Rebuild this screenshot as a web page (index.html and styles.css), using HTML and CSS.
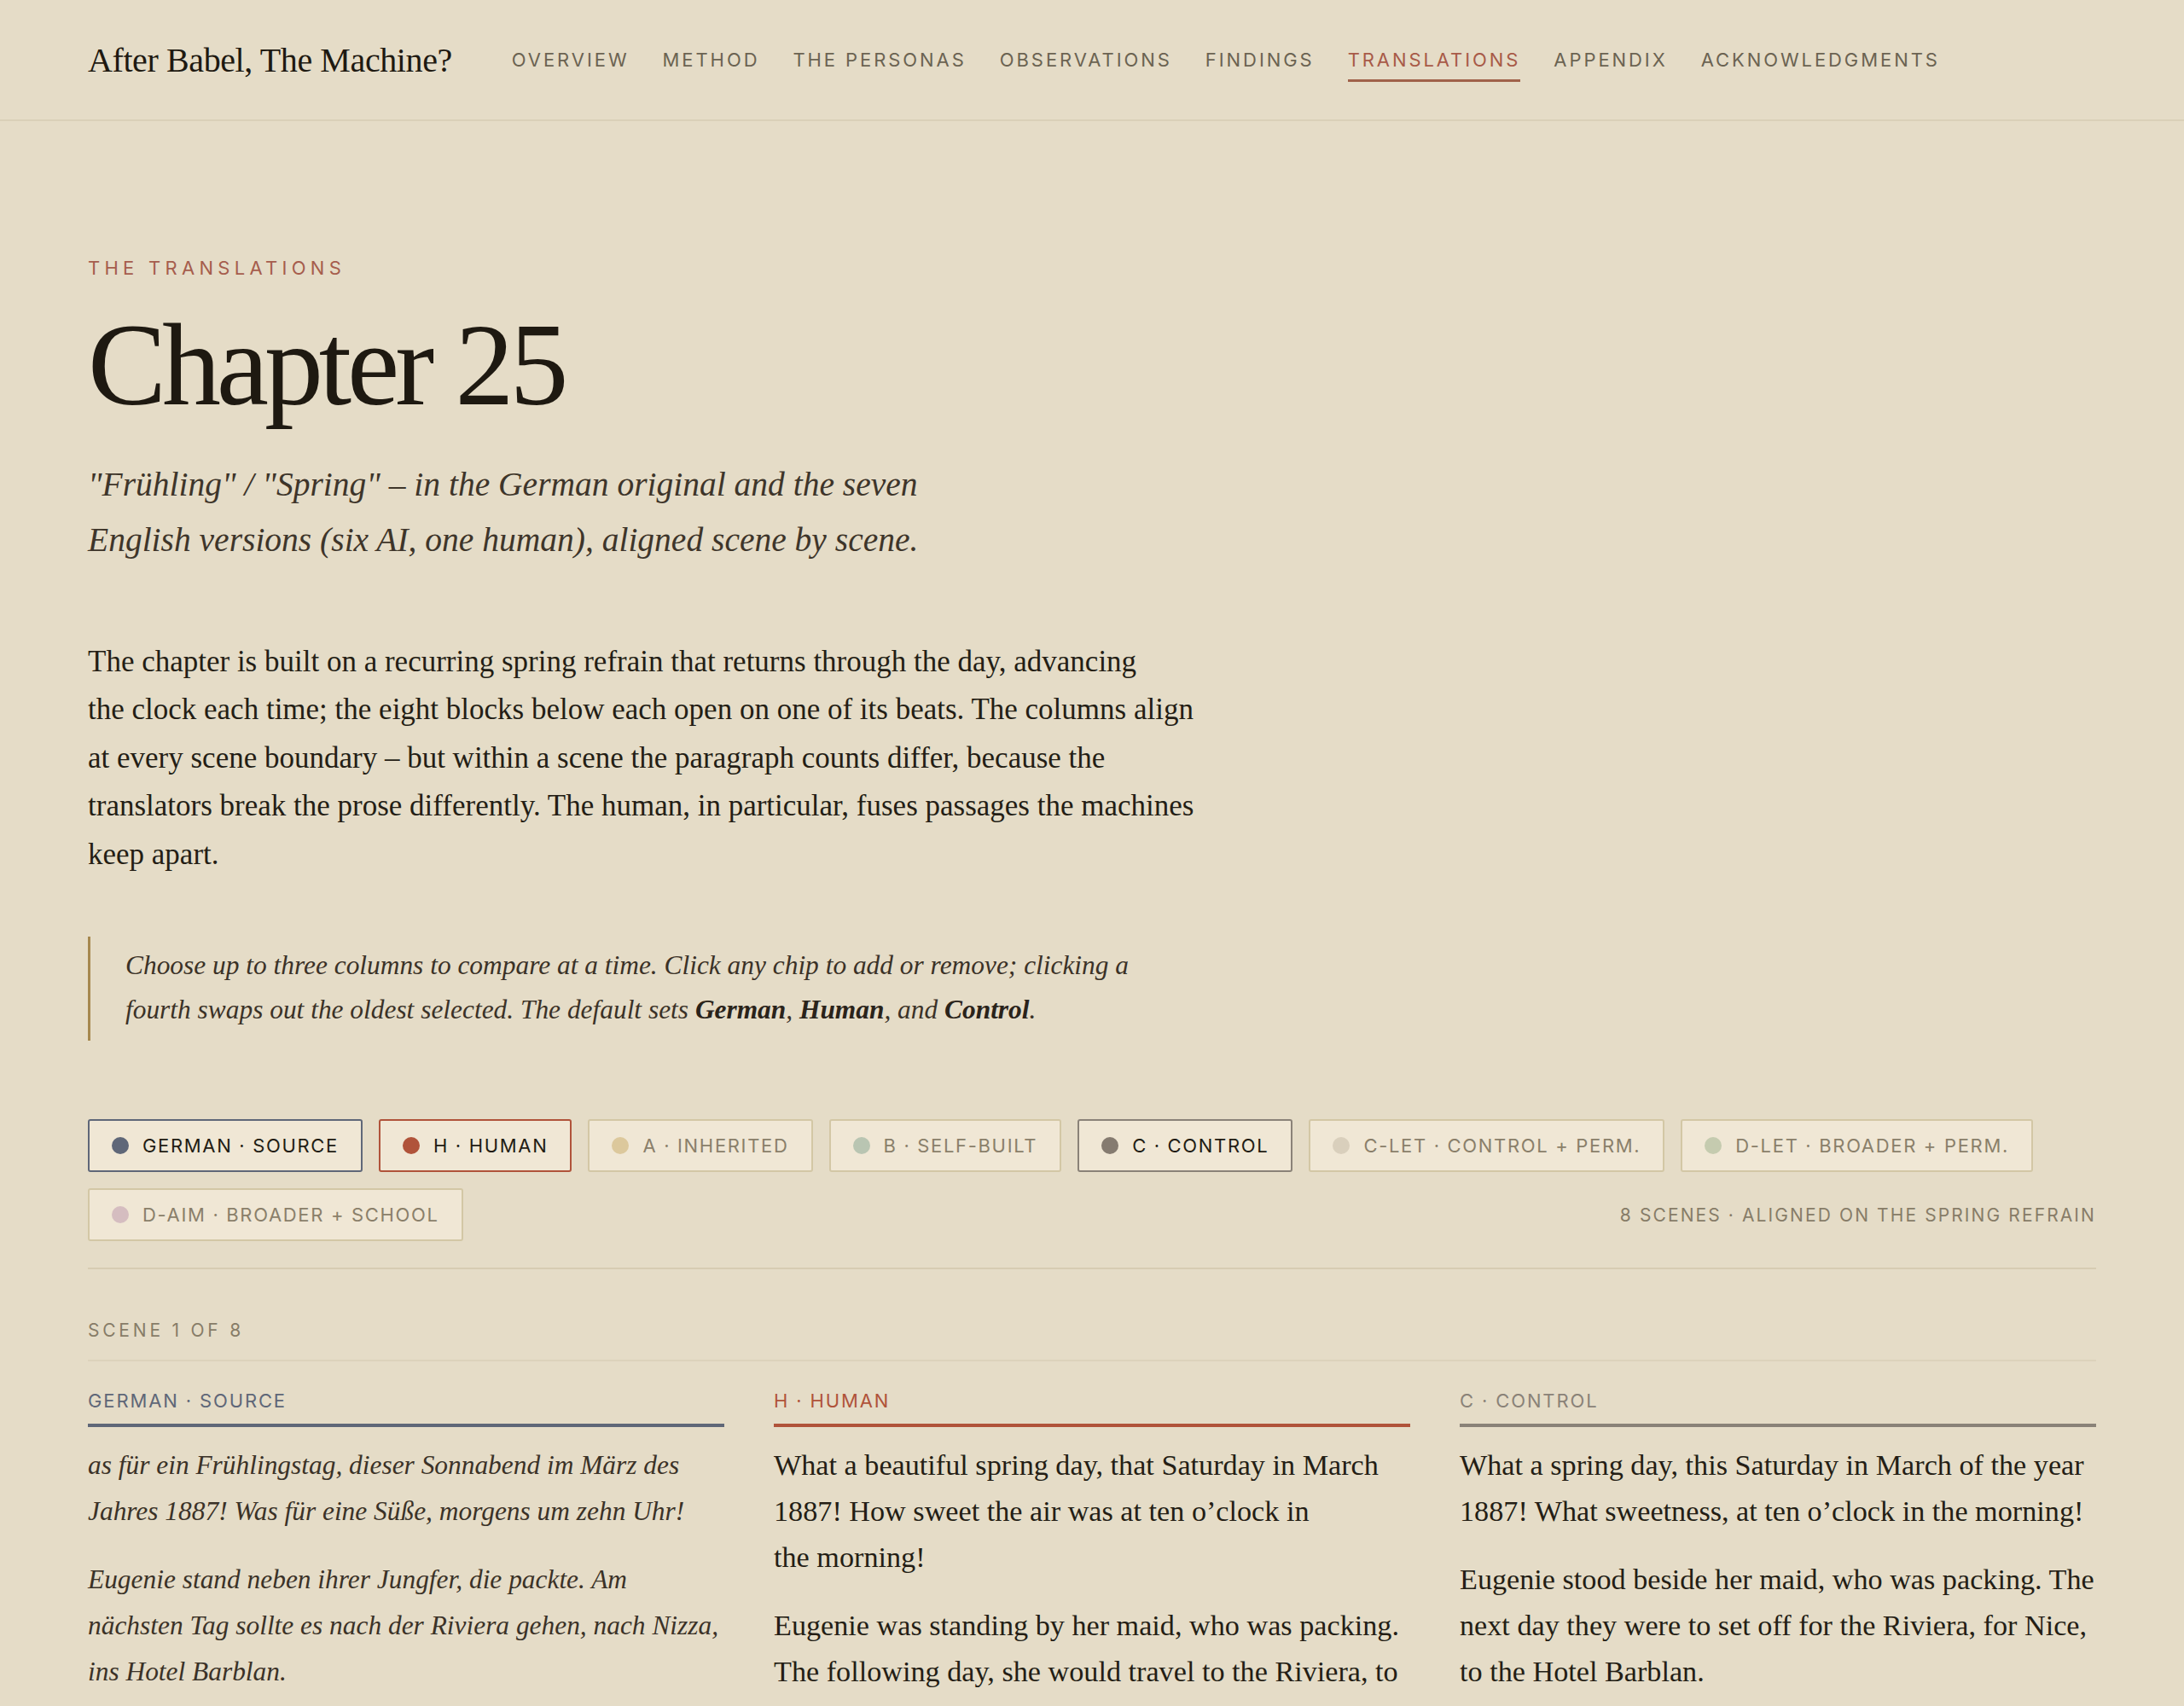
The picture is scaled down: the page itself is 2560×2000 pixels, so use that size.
FILE: index.html
```html
<!DOCTYPE html>
<html lang="en">
<head>
<meta charset="utf-8">
<title>Chapter 25 — After Babel, The Machine?</title>
<link rel="stylesheet" href="styles.css">
</head>
<body>
<header class="site-header">
  <div class="brand">After Babel, The Machine?</div>
  <nav class="nav">
    <a href="#">Overview</a>
    <a href="#">Method</a>
    <a href="#">The Personas</a>
    <a href="#">Observations</a>
    <a href="#">Findings</a>
    <a href="#" class="active">Translations</a>
    <a href="#">Appendix</a>
    <a href="#">Acknowledgments</a>
  </nav>
</header>

<main class="page">
  <p class="eyebrow">The Translations</p>
  <h1 class="title">Chapter 25</h1>
  <p class="dek">"Frühling" / "Spring" – in the German original and the seven English versions (six AI, one human), aligned scene by scene.</p>
  <p class="intro">The chapter is built on a recurring spring refrain that returns through the day, advancing<br>the clock each time; the eight blocks below each open on one of its beats. The columns align at every scene boundary – but within a scene the paragraph counts differ, because the translators break the prose differently. The human, in particular, fuses passages the machines keep apart.</p>
  <blockquote class="note">Choose up to three columns to compare at a time. Click any chip to add or remove; clicking a fourth swaps out the oldest selected. The default sets <b>German</b>, <b>Human</b>, and <b>Control</b>.</blockquote>

  <div class="toolbar">
    <button class="chip on c-german"><span class="dot"></span>German · Source</button>
    <button class="chip on c-human"><span class="dot"></span>H · Human</button>
    <button class="chip c-a"><span class="dot"></span>A · Inherited</button>
    <button class="chip c-b"><span class="dot"></span>B · Self-built</button>
    <button class="chip on c-control"><span class="dot"></span>C · Control</button>
    <button class="chip c-clet"><span class="dot"></span>C-LET · Control + Perm.</button>
    <button class="chip c-dlet"><span class="dot"></span>D-LET · Broader + Perm.</button>
    <button class="chip c-daim"><span class="dot"></span>D-AIM · Broader + School</button>
    <span class="meta">8 scenes · aligned on the spring refrain</span>
  </div>

  <section class="scene">
    <div class="scene-label">Scene 1 of 8</div>
    <div class="cols">
      <div class="col col-german">
        <div class="col-head">German · Source</div>
        <p>as für ein Frühlingstag, dieser Sonnabend im März des Jahres 1887! Was für eine Süße, morgens um zehn Uhr!</p>
        <p>Eugenie stand neben ihrer Jungfer, die packte. Am nächsten Tag sollte es nach der Riviera gehen, nach Nizza, ins Hotel Barblan.</p>
      </div>
      <div class="col col-human">
        <div class="col-head">H · Human</div>
        <p>What a beautiful spring day, that Saturday in March 1887! How sweet the air was at ten o’clock in the morning!</p>
        <p>Eugenie was standing by her maid, who was packing. The following day, she would travel to the Riviera, to Nice, to the Hotel Barblan.</p>
      </div>
      <div class="col col-control">
        <div class="col-head">C · Control</div>
        <p>What a spring day, this Saturday in March of the year 1887! What sweetness, at ten o’clock in the morning!</p>
        <p>Eugenie stood beside her maid, who was packing. The next day they were to set off for the Riviera, for Nice, to the Hotel Barblan.</p>
      </div>
    </div>
  </section>
</main>
</body>
</html>
```

FILE: styles.css
```css
* { box-sizing: border-box; }

html, body {
  margin: 0;
  padding: 0;
  background: #e5dcc7;
  color: #221c13;
  font-family: "Liberation Serif", "Times New Roman", serif;
}

/* ---------- header ---------- */
.site-header {
  display: flex;
  align-items: center;
  height: 142px;
  padding: 0 103px;
  border-bottom: 2px solid #dad0b8;
}

.brand {
  font-size: 40px;
  color: #1e1911;
  letter-spacing: -0.01em;
  margin-right: 70px;
  white-space: nowrap;
}

.nav {
  display: flex;
  gap: 39px;
}

.nav a {
  font-family: Inter, "Liberation Sans", sans-serif;
  font-size: 22px;
  line-height: 22px;
  letter-spacing: 0.133em;
  text-transform: uppercase;
  color: #6b6352;
  text-decoration: none;
  padding: 14px 0 12px;
  border-bottom: 3px solid transparent;
}

.nav a.active {
  color: #a85a48;
  border-bottom-color: #a0624a;
}

/* ---------- page ---------- */
.page {
  padding: 0 103px 120px;
}

.eyebrow {
  margin: 157px 0 0;
  font-family: Inter, "Liberation Sans", sans-serif;
  font-size: 22px;
  line-height: 30px;
  letter-spacing: 0.24em;
  text-transform: uppercase;
  color: #a65d4d;
}

.title {
  margin: 30px 0 0;
  font-size: 138px;
  line-height: 138px;
  font-weight: 400;
  letter-spacing: -0.037em;
  color: #1e1911;
}

.dek {
  margin: 39px 0 0;
  max-width: 1050px;
  font-style: italic;
  font-size: 39.5px;
  line-height: 65px;
  color: #3e352a;
}

.intro {
  margin: 82px 0 0;
  max-width: 1310px;
  font-size: 35px;
  line-height: 56.4px;
  color: #241e15;
}

.note {
  margin: 68px 0 0;
  padding: 8px 0 10px 41px;
  border-left: 3px solid #a6884f;
  max-width: 1264px;
  font-style: italic;
  font-size: 31.4px;
  line-height: 52px;
  color: #3b3227;
}

.note b {
  font-weight: 700;
  color: #2a231a;
}

/* ---------- chips toolbar ---------- */
.toolbar {
  margin-top: 70px;
  display: flex;
  flex-wrap: wrap;
  align-items: center;
  gap: 19px 19px;
  padding: 22px 0 31px;
  border-bottom: 2px solid #d7ccb2;
}

.chip {
  display: inline-flex;
  align-items: center;
  gap: 16px;
  height: 62px;
  padding: 0 26px 0 26px;
  background: #f0e7d5;
  border: 2px solid #d3c7a5;
  border-radius: 3px;
  font-family: Inter, "Liberation Sans", sans-serif;
  font-size: 22px;
  letter-spacing: 0.076em;
  text-transform: uppercase;
  color: #8a7f6a;
  cursor: pointer;
}

.chip.on { color: #221c13; }

.dot {
  width: 20px;
  height: 20px;
  border-radius: 50%;
  flex: none;
}

.c-german { border-color: #5f6778; }
.c-german .dot { background: #5f6778; }
.c-human { border-color: #b0533a; }
.c-human .dot { background: #b0533a; }
.c-control { border-color: #8a8278; }
.c-control .dot { background: #857b70; }
.c-a .dot { background: #dcc89c; }
.c-b .dot { background: #b9c5b2; }
.c-clet .dot { background: #d9cfbc; }
.c-dlet .dot { background: #c5cbaf; }
.c-daim .dot { background: #d5bdc0; }

.meta {
  margin-left: auto;
  font-family: Inter, "Liberation Sans", sans-serif;
  font-size: 21px;
  letter-spacing: 0.1em;
  text-transform: uppercase;
  color: #877c68;
}

/* ---------- scene ---------- */
.scene-label {
  margin-top: 58px;
  padding-bottom: 20px;
  border-bottom: 2px solid #dcd2bb;
  font-family: Inter, "Liberation Sans", sans-serif;
  font-size: 21px;
  line-height: 28px;
  letter-spacing: 0.18em;
  text-transform: uppercase;
  color: #877c68;
}

.cols {
  display: grid;
  grid-template-columns: repeat(3, 1fr);
  gap: 58px;
  margin-top: 32px;
}

.col-head {
  padding-bottom: 13px;
  border-bottom: 4px solid;
  font-family: Inter, "Liberation Sans", sans-serif;
  font-size: 22px;
  line-height: 28px;
  letter-spacing: 0.085em;
  text-transform: uppercase;
}

.col-german .col-head { color: #5f6778; border-color: #5f6778; }
.col-human .col-head { color: #b0533a; border-color: #b0533a; }
.col-control .col-head { color: #8a8278; border-color: #8a8278; }

.col p {
  margin: 18px 0 26px;
  font-size: 34.2px;
  line-height: 54px;
  color: #241e15;
  text-wrap: pretty;
}

.col p + p { margin-top: 0; }

.col-german p {
  font-style: italic;
  font-size: 31.4px;
  color: #3b3227;
}
```
